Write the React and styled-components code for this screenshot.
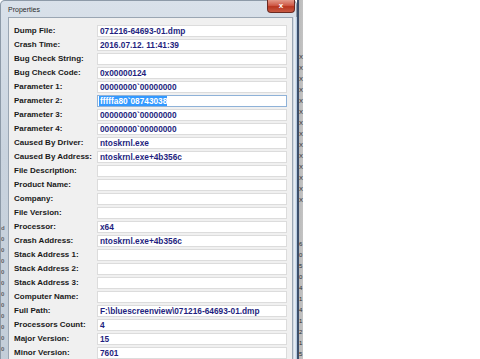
import React from 'react';
import styled, { createGlobalStyle } from 'styled-components';

const GlobalStyle = createGlobalStyle`
  html, body {
    margin: 0;
    padding: 0;
    background: #ffffff;
  }
`;

const Screen = styled.div`
  width: 480px;
  height: 359px;
  overflow: hidden;
  display: flex;
  align-items: flex-start;
  background: #ffffff;
  font-family: "Liberation Sans", Arial, sans-serif;
`;

const Window = styled.div`
  width: 297px;
  height: 380px;
  flex-shrink: 0;
  display: flex;
  flex-direction: column;
  border-radius: 5px 5px 0 0;
  background: linear-gradient(180deg, #d9e1ea 0%, #c9d3de 40%, #c3cdd8 100%);
  box-shadow: inset 0 0 0 1px #8d9aa8;
`;

const TitleBar = styled.div`
  height: 17px;
  display: flex;
  align-items: flex-start;
  padding-left: 8px;
`;

const Title = styled.span`
  margin-top: 5px;
  font-family: "Liberation Sans", Arial, sans-serif;
  font-size: 7px;
  line-height: 9px;
  color: #2a2a2a;
`;

const CloseButton = styled.div`
  margin-left: auto;
  margin-right: 2px;
  width: 28px;
  height: 13px;
  border-radius: 0 0 4px 4px;
  background: linear-gradient(180deg, #e39a8a 0%, #cf5a47 45%, #b8361f 55%, #c85a44 100%);
  border: 1px solid #6b2a22;
  border-top: none;
  box-sizing: border-box;
  display: flex;
  align-items: center;
  justify-content: center;
  color: #ffffff;
  font-size: 8px;
  font-weight: bold;
  line-height: 1;
`;

const Body = styled.div`
  flex: 1;
  display: flex;
`;

const SideGlass = styled.div`
  width: ${(p) => p.$w}px;
  flex-shrink: 0;
  padding-top: ${(p) => p.$top}px;
  box-sizing: border-box;
`;

const GlassGlyph = styled.div`
  height: 11px;
  font-family: "Liberation Sans", Arial, sans-serif;
  font-size: 6px;
  font-weight: bold;
  line-height: 11px;
  color: #3b3b3b;
  padding-left: 1px;
  opacity: 0.75;
`;

const RightEdge = styled.div`
  width: 4px;
  flex-shrink: 0;
  background: linear-gradient(90deg, #c6d0db 0%, #eef3f8 45%, #a9c2dc 100%);
`;

const Client = styled.div`
  flex: 1;
  background: #f0f0f0;
  border: 1px solid #9aa6b3;
  border-bottom: none;
  padding: 7px 5px 0 5px;
  display: flex;
  flex-direction: column;
  gap: 2px;
`;

const Row = styled.div`
  display: grid;
  grid-template-columns: 83px 190px;
  height: 12px;
  align-items: center;
`;

const Label = styled.span`
  font-size: 8px;
  font-weight: bold;
  color: #1a1a1a;
  white-space: nowrap;
  line-height: 12px;
`;

const ValueBox = styled.div`
  height: 12px;
  box-sizing: border-box;
  background: #ffffff;
  border: 1px solid ${(p) => (p.$focused ? '#8fb2d8' : '#dcdcdc')};
  padding-left: 1px;
  display: flex;
  align-items: center;
  overflow: hidden;
`;

const ValueText = styled.span`
  font-size: 8.3px;
  font-weight: bold;
  line-height: 10px;
  white-space: nowrap;
  color: ${(p) => (p.$selected ? '#ffffff' : '#1f1f80')};
  background: ${(p) => (p.$selected ? '#3399ff' : 'transparent')};
  padding-left: 1px;
`;

const BackSliver = styled.div`
  width: 6px;
  height: 359px;
  flex-shrink: 0;
  background: linear-gradient(90deg, #3c4f6b 0%, #3c4f6b 30%, #b9b9b9 30%, #c4c4c4 100%);
  padding-top: 52px;
  box-sizing: border-box;
`;

const SliverGlyph = styled.div`
  height: 11px;
  font-family: "Liberation Sans", Arial, sans-serif;
  font-size: 6px;
  line-height: 11px;
  color: #2c2c2c;
  padding-left: 2px;
`;

const rows = [
  ['Dump File:', '071216-64693-01.dmp'],
  ['Crash Time:', '2016.07.12. 11:41:39'],
  ['Bug Check String:', ''],
  ['Bug Check Code:', '0x00000124'],
  ['Parameter 1:', '00000000`00000000'],
  ['Parameter 2:', 'fffffa80`08743038', true],
  ['Parameter 3:', '00000000`00000000'],
  ['Parameter 4:', '00000000`00000000'],
  ['Caused By Driver:', 'ntoskrnl.exe'],
  ['Caused By Address:', 'ntoskrnl.exe+4b356c'],
  ['File Description:', ''],
  ['Product Name:', ''],
  ['Company:', ''],
  ['File Version:', ''],
  ['Processor:', 'x64'],
  ['Crash Address:', 'ntoskrnl.exe+4b356c'],
  ['Stack Address 1:', ''],
  ['Stack Address 2:', ''],
  ['Stack Address 3:', ''],
  ['Computer Name:', ''],
  ['Full Path:', 'F:\\bluescreenview\\071216-64693-01.dmp'],
  ['Processors Count:', '4'],
  ['Major Version:', '15'],
  ['Minor Version:', '7601'],
];

const leftGlyphs = ['d', '0', '0', '0', '0', '0', '0', '0', '0', '0', '0', '0'];
const sliverGlyphs = [
  'X', 'X', 'X', 'X', 'X', 'X', 'X', 'X', 'X', 'X', 'X', 'X', 'X', 'X',
  '', '', '', '6', '0', '5', '0', '4', '1', '4', '1', '2', '1', '5',
];

export default function App() {
  return (
    <Screen>
      <GlobalStyle />
      <Window>
        <TitleBar>
          <Title>Properties</Title>
          <CloseButton>x</CloseButton>
        </TitleBar>
        <Body>
          <SideGlass $w={8} $top={206}>
            {leftGlyphs.map((g, i) => (
              <GlassGlyph key={i}>{g}</GlassGlyph>
            ))}
          </SideGlass>
          <Client>
            {rows.map(([label, value, selected]) => (
              <Row key={label}>
                <Label>{label}</Label>
                <ValueBox $focused={selected}>
                  {value && <ValueText $selected={selected}>{value}</ValueText>}
                </ValueBox>
              </Row>
            ))}
          </Client>
          <RightEdge />
        </Body>
      </Window>
      <BackSliver>
        {sliverGlyphs.map((g, i) => (
          <SliverGlyph key={i}>{g}</SliverGlyph>
        ))}
      </BackSliver>
    </Screen>
  );
}
